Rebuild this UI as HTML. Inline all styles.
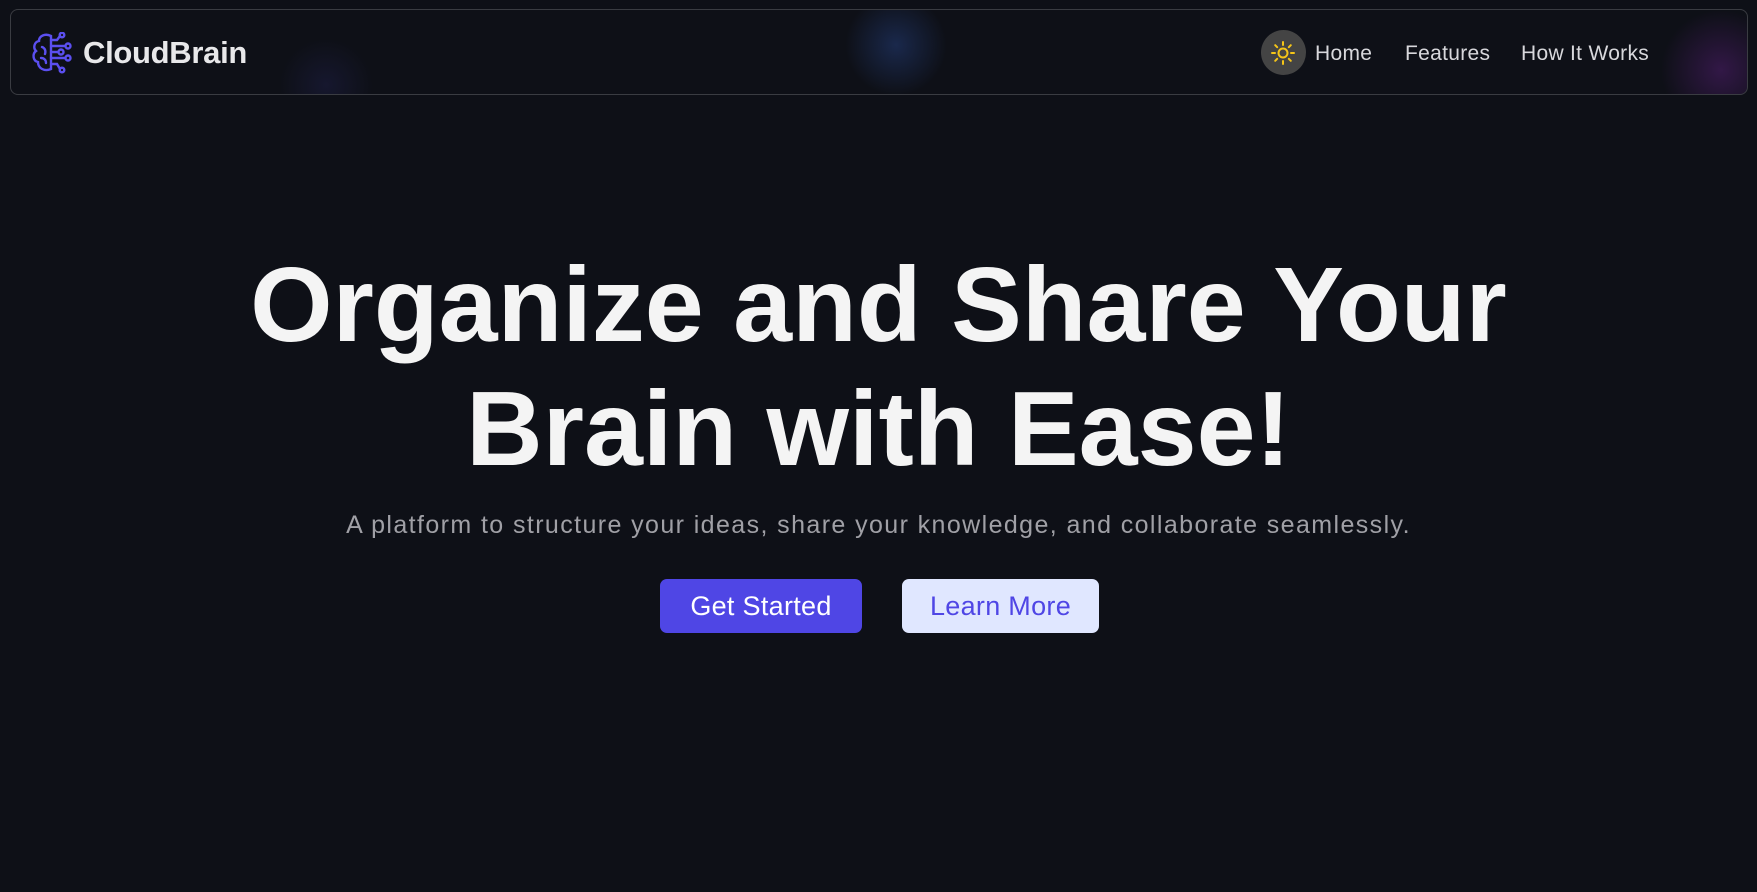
<!DOCTYPE html>
<html><head><meta charset="utf-8"><style>
*{margin:0;padding:0;box-sizing:border-box}
body{width:1757px;height:892px;background:#0e1017;font-family:"Liberation Sans",sans-serif;overflow:hidden;position:relative}
.nav{position:absolute;left:10px;top:9px;width:1738px;height:86px;border:1px solid #3a3c42;border-radius:8px;overflow:hidden;background:#0e1017}
.g1{position:absolute;left:830px;top:-20px;width:110px;height:110px;border-radius:50%;background:radial-gradient(circle,rgba(40,70,140,.45),rgba(40,70,140,0) 65%)}
.g2{position:absolute;left:1640px;top:0px;width:140px;height:120px;border-radius:50%;background:radial-gradient(circle,rgba(80,30,110,.55),rgba(80,30,110,0) 65%)}
.g3{position:absolute;left:260px;top:30px;width:110px;height:90px;border-radius:50%;background:radial-gradient(circle,rgba(40,40,100,.3),rgba(40,40,100,0) 65%)}
.logo{position:absolute;left:83px;top:35px;color:#e8e8ea;font-weight:bold;font-size:31px;letter-spacing:-0.3px}
.sun{position:absolute;left:1261px;top:30px;width:45px;height:45px;border-radius:50%;background:#444}
.nl{position:absolute;top:42px;color:#d8d8dc;font-size:21px;letter-spacing:0.3px}
h1{position:absolute;left:0;width:1757px;text-align:center;color:#f4f4f4;font-size:106px;font-weight:bold;line-height:124px;top:243px}
.sub{position:absolute;left:0;width:1757px;text-align:center;top:511px;color:#a0a0a6;font-size:25px;letter-spacing:1.4px}
.btn{position:absolute;top:579px;height:54px;border-radius:7px;font-size:27px;text-align:center;line-height:54px;letter-spacing:0.3px}
</style></head><body>
<div class="nav"><div class="g1"></div><div class="g2"></div><div class="g3"></div></div>
<svg style="position:absolute;left:31px;top:32px" width="44" height="42" viewBox="0 0 44 42" fill="none" stroke="#5b4ff0" stroke-width="2.4" stroke-linecap="round">
<path d="M20 4 C14 1 8 4 8 9 C3 10 2 16 5 19 C1 22 2 29 7 30 C7 36 13 40 20 37 Z"/>
<path d="M11 15 C14 16 15 19 14 22 M10 26 C13 26 15 28 15 31"/>
<path d="M20 8 L26 8 L29 4 M20 14 L34 14 M20 20 L27 20 M20 26 L34 26 M20 32 L26 32 L29 37"/>
<circle cx="31" cy="3" r="2.3"/><circle cx="37" cy="14" r="2.5"/><circle cx="30" cy="20" r="2.5"/><circle cx="37" cy="26" r="2.5"/><circle cx="31" cy="38" r="2.3"/>
</svg>
<div class="logo">CloudBrain</div>
<div class="sun"></div>
<svg style="position:absolute;left:1271px;top:41px" width="24" height="24" viewBox="0 0 24 24" stroke="#f5c518" stroke-width="2" fill="none" stroke-linecap="round"><circle cx="12" cy="12" r="4.5"/><path d="M12 1v3M12 20v3M1 12h3M20 12h3M4.2 4.2l2 2M17.8 17.8l2 2M4.2 19.8l2-2M17.8 6.2l2-2"/></svg>
<div class="nl" style="left:1315px">Home</div>
<div class="nl" style="left:1405px">Features</div>
<div class="nl" style="left:1521px">How It Works</div>
<h1>Organize and Share Your<br>Brain with Ease!</h1>
<div class="sub">A platform to structure your ideas, share your knowledge, and collaborate seamlessly.</div>
<div class="btn" style="left:660px;width:202px;background:#4f46e5;color:#fff">Get Started</div>
<div class="btn" style="left:902px;width:197px;background:#e0e7ff;color:#4f46e5">Learn More</div>
</body></html>
